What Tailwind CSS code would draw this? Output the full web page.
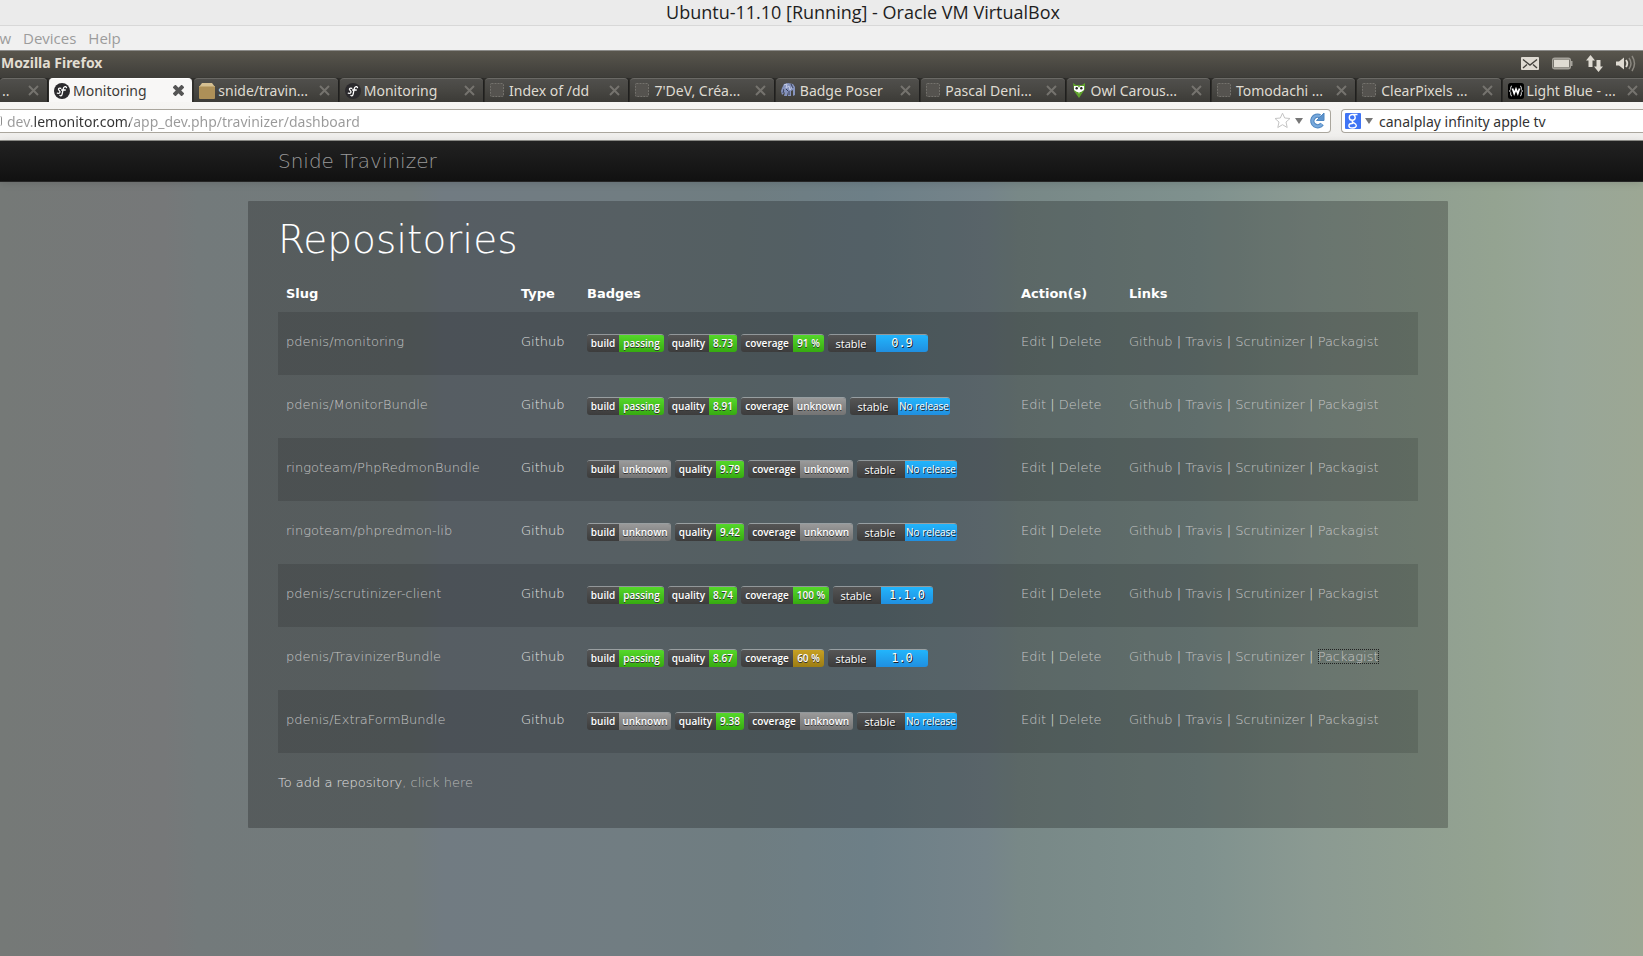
<!DOCTYPE html>
<html lang="en">
<head>
<meta charset="utf-8">
<title>Snide Travinizer</title>
<script src="https://cdn.jsdelivr.net/npm/@tailwindcss/browser@4"></script>
</head>
<body class="flex min-h-screen flex-col overflow-x-hidden bg-[#717f83] font-['Open_Sans',sans-serif]">

<!-- Virtual machine window -->
<header class="border-b border-[#d8d8d8] bg-[#ebebeb] pl-[83px] text-center text-[18px] leading-[25px] text-[#1e1e1e] whitespace-nowrap">Ubuntu-11.10 [Running] - Oracle VM VirtualBox</header>
<nav class="flex h-6 gap-3 bg-[#f0f0f0] text-[15px] leading-6 text-[#9c9c9c]" aria-label="Machine menu">
  <button class="-ml-[7px] w-[18px] text-right">w</button>
  <button>Devices</button>
  <button>Help</button>
</nav>

<!-- Ubuntu panel -->
<div class="flex h-7 items-center justify-between border-t border-[#8c8c8a] bg-linear-to-b from-[#59564d] to-[#3e3d39] pr-[7px] pl-[1px] font-['Noto_Sans',sans-serif]">
  <h1 class="pb-1 text-[14px] leading-5 font-bold text-[#e2ddd2]">Mozilla Firefox</h1>
  <div class="flex items-center gap-[13px] pb-[2px] text-[#dfdbd2]">
    <svg width="18" height="13" viewBox="0 0 18 13" aria-label="Mail"><rect width="18" height="13" rx="1" fill="currentColor"/><path d="M2 2.500L9 8L16 2.500M2 11L6 7.500M16 11L12 7.500" fill="none" stroke="#45433e" stroke-width="1.400"/></svg>
    <svg width="21" height="13" viewBox="0 0 21 13" aria-label="Battery"><rect x=".75" y="1.250" width="17.500" height="10.500" rx="2" fill="none" stroke="#a5a29a" stroke-width="1.500"/><rect x="2" y="2.500" width="15" height="8" fill="currentColor"/><path d="M19.500 4v5" stroke="#a5a29a" stroke-width="2"/></svg>
    <svg width="17" height="17" viewBox="0 0 17 17" aria-label="Network"><path d="M0 5.500L4.500 0L9 5.500H6.500V12H2.500V5.500ZM8 11.500L12.500 17L17 11.500H14.500V5H10.500V11.500Z" fill="currentColor"/></svg>
    <svg width="20" height="17" viewBox="0 0 20 17" aria-label="Sound"><path d="M0 6.500H3L8 2.500V14.500L3 10.500H0Z" fill="currentColor"/><path d="M10 5Q12.500 8.500 10 12" fill="none" stroke="currentColor" stroke-width="1.800"/><path d="M13 3Q17 8.500 13 14M16 1Q21 8.500 16 16" fill="none" stroke="#8b8880" stroke-width="1.500"/></svg>
  </div>
</div>

<!-- Tab strip -->
<div id="tabs" role="tablist" class="-mr-[3px] flex h-6 gap-[2px] bg-[#2f2e2b] font-['Noto_Sans',sans-serif] text-[14px] leading-[23px]"></div>

<!-- Address bar -->
<div class="flex h-[39px] items-center gap-[10px] border-b border-[#8f8f8a] bg-linear-to-b from-[#f6f5f3] to-[#efeeec] pb-[1px] font-['Noto_Sans',sans-serif] text-[14px]">
  <div class="flex h-6 min-w-0 flex-1 items-center rounded-r-[4px] border border-l-0 border-[#aaa69d] bg-white pr-[5px]">
    <span class="h-[10px] w-[2px] rounded-r-full border-r border-[#8e8e8e]"></span>
    <input aria-label="Address" value="dev.lemonitor.com/app_dev.php/travinizer/dashboard" class="ml-[5px] min-w-0 flex-1 bg-[linear-gradient(90deg,#999_27px,#333_27px,#333_123px,#999_123px)] bg-clip-text pt-[2px] text-transparent outline-none">
    <button aria-label="Bookmark"><svg width="17" height="17" viewBox="0 0 17 17"><path d="M8.500 1.200L10.700 6L16 6.500L12 10L13.200 15.500L8.500 12.700L3.800 15.500L5 10L1 6.500L6.300 6Z" fill="#fff" stroke="#c4c4c4"/></svg></button>
    <button aria-label="History" class="ml-1"><svg width="8" height="6" viewBox="0 0 8 6"><path d="M0 0H8L4 6Z" fill="#777"/></svg></button>
    <button aria-label="Reload" class="ml-[6px]"><svg width="16" height="17" viewBox="0 0 16 17"><path d="M13 12A5.300 5.300 0 1 1 11 4.200" fill="none" stroke="#4f86c0" stroke-width="4.400"/><path d="M13 12A5.300 5.300 0 1 1 11 4.200" fill="none" stroke="#78a9dc" stroke-width="2.400"/><path d="M15 1V8.500H7.500Z" fill="#5d93cc" stroke="#4f86c0"/></svg></button>
  </div>
  <div class="flex h-6 w-[302px] items-center rounded-l-[4px] border border-r-0 border-[#aaa69d] bg-white pl-[3px]">
    <svg width="16" height="16" viewBox="0 0 16 16" aria-label="Google"><rect width="16" height="16" rx="1" fill="#3f74f5"/><path d="M12.500 1.500H7.800C5.600 1.500 4.300 2.800 4.300 4.500C4.300 6.200 5.500 7.300 7.300 7.300C9.100 7.300 10.200 6.100 10.200 4.600C10.200 3.200 9.400 2 8.300 1.500M7.800 7.300C6.600 8.300 7.300 9 8.500 9.700C10.300 10.700 11.300 11.300 11.300 12.600C11.300 14.100 9.800 15 7.600 15C5.300 15 3.900 14.200 3.900 12.700C3.900 11 5.800 10.200 8.200 10.200" fill="none" stroke="#fff" stroke-width="1.400"/></svg>
    <button aria-label="Search engines" class="ml-1"><svg width="8" height="6" viewBox="0 0 8 6"><path d="M0 0H8L4 6Z" fill="#777"/></svg></button>
    <input aria-label="Search" value="canalplay infinity apple tv" class="ml-[6px] min-w-0 flex-1 pt-[2px] text-[#333] outline-none">
  </div>
</div>

<!-- Page -->
<div class="flex flex-1 flex-col bg-[linear-gradient(90deg,#757977_0%,#767879_10%,#737a7b_12%,#727b7c_25%,#717b82_27%,#717d82_38%,#6f7d81_45%,#6d7f87_53%,#75848a_60%,#788887_62%,#7f918e_73%,#8b9a92_80%,#94a391_91%,#98a698_95%,#9ca794_100%)] font-['DejaVu_Sans',sans-serif] text-[13px] leading-5 font-extralight text-[#e0e0e0]">
  <div class="h-[41px] border-b border-[#252525] bg-linear-to-b from-[#222] to-[#111] pl-[278px] shadow-[0_1px_8px_rgba(0,0,0,0.12)]">
    <a href="#" class="text-[20px] leading-10 text-[#999]">Snide Travinizer</a>
  </div>
  <main class="mt-[19px] mr-[195px] mb-10 ml-[248px] rounded-[1px] bg-black/24 px-[30px] pb-[35px]">
    <h2 class="pt-[19px] text-[39px] leading-10 text-white">Repositories</h2>
    <table class="mt-[15px] w-full table-fixed text-left">
      <colgroup><col class="w-[235px]"><col class="w-[66px]"><col class="w-[434px]"><col class="w-[108px]"><col></colgroup>
      <thead class="text-white">
        <tr class="h-[37px]"><th class="px-2 font-bold">Slug</th><th class="px-2 font-bold">Type</th><th class="px-2 font-bold">Badges</th><th class="px-2 font-bold">Action(s)</th><th class="px-2 font-bold">Links</th></tr>
      </thead>
      <tbody id="rows"></tbody>
    </table>
    <p class="mt-5">To add a repository<a href="#" class="text-[#b8b8b8]">, click here</a></p>
  </main>
</div>

<script>
const blank = '<svg width="15" height="15" viewBox="0 0 15 15"><rect x=".5" y=".5" width="13" height="13" rx="1" fill="#55534f" stroke="#74726d" stroke-dasharray="2 1"/></svg>';
const sf = '<svg width="16" height="16" viewBox="0 0 16 16"><circle cx="8" cy="8" r="8" fill="#2b2a2d"/><path d="M6.800 5.300C5 4.500 3.700 6 5 7.300C6.900 8.600 6 10.800 3.300 10.200M12.500 4.600C11.500 2.700 9.600 3.800 9.100 6.300L8.200 10.800C7.800 13 6.700 13.300 5.900 12.400M7.600 7H11.300" fill="none" stroke="#fff" stroke-width="1.300" stroke-linecap="round"/></svg>';
const box = '<svg width="16" height="16" viewBox="0 0 16 16"><path d="M3 0H13L16 4H0Z" fill="#d5c092"/><rect y="3" width="16" height="13" rx="1" fill="#ad9058"/><path d="M0 3.500H16" stroke="#c2a872"/></svg>';
const elephant = '<svg width="15" height="15" viewBox="0 0 15 15"><path d="M1 5L3 1L7 0L12 1L14 4V12L12 13V7L10 8V13H7V9L6 13H3L4 9L1 12L0 8Z" fill="#8593bd"/><path d="M3 2L6 1L5 5L8 3L9 7L12 3M2 8L4 6" fill="none" stroke="#c3cbe6"/><path d="M5 6L7 8M10 1L12 5M8 8V12M3 6L2 10" stroke="#343b58"/></svg>';
const owl = '<svg width="15" height="15" viewBox="0 0 15 15"><path d="M1 0L4 2H10L13 0V6L7 15L2 8Z" fill="#5fa32c"/><path d="M2 3H6L7 5L8 3H12V7L9 9H5L2 7Z" fill="#fff"/><path d="M6 8H8L7 11Z" fill="#fff"/><circle cx="4.700" cy="5.300" r="1.200" fill="#222"/><circle cx="9.300" cy="5.300" r="1.200" fill="#222"/></svg>';
const wrap = '<svg width="16" height="16" viewBox="0 0 16 16"><rect width="16" height="16" rx="2.500" fill="#000"/><path d="M4 3Q2.500 3 2.700 5V6.500L1.500 8L2.700 9.500V11Q2.500 13 4 13M12 3Q13.500 3 13.300 5V6.500L14.500 8L13.300 9.500V11Q13.500 13 12 13" fill="none" stroke="#ddd"/><path d="M4.500 5.500L6.200 10.500L8 6L9.800 10.500L11.500 5.500" fill="none" stroke="#fff" stroke-width="1.700"/></svg>';
const tabs = [[sf,'Monitoring'],[box,'snide/travin...'],[sf,'Monitoring'],[blank,'Index of /dd'],[blank,"7'DeV, Créa..."],[elephant,'Badge Poser'],[blank,'Pascal Deni...'],[owl,'Owl Carous...'],[blank,'Tomodachi ...'],[blank,'ClearPixels ...'],[wrap,'Light Blue - ...']];
const dark = 'rounded-t-[4px] border-t border-[#6a6965] bg-linear-to-b from-[#504f4c] via-[#474642] to-[#3c3b37] text-[#dfdbd2] shadow-[1px_0_1px_#1f1f1d]';
const cross = active => `<button aria-label="Close tab"><svg width="11" height="11" viewBox="0 0 11 11"><path d="M1 1L10 10M10 1L1 10" stroke="${active ? '#555' : '#75736e'}" stroke-width="${active ? 4 : 2}"/></svg></button>`;
document.getElementById('tabs').innerHTML =
  `<div class="flex w-[47px] shrink-0 items-center justify-between pr-2 pl-[2px] ${dark}"><span>..</span>${cross(false)}</div>` +
  tabs.map(([icon, name], i) => `<div class="flex min-w-0 flex-1 items-center pr-2 pl-[5px] ${i ? dark : 'rounded-t-[4px] border-t border-white bg-[#f8f7f6] text-[#3c3b37]'}">
    <span class="w-[19px] shrink-0">${icon}</span><button role="tab" class="min-w-0 flex-1 text-left whitespace-nowrap">${name}</button>${cross(!i)}</div>`).join('');

const tone = {
  green: 'from-[#55d82a] to-[#36aa10]',
  gray: 'from-[#9a9a9a] to-[#737373]',
  gold: 'from-[#c7a023] to-[#9c7d14]'
};
const badge = (label, lw, value, vw, color) => `<span class="flex h-[18px] overflow-hidden rounded-[3px] border-t border-white/40 text-center font-['Open_Sans',sans-serif] text-[10px] leading-4 font-semibold text-white [text-shadow:0_1px_0_#333] whitespace-nowrap"><span class="${lw} bg-linear-to-b from-[#555] to-[#3c3c3c]">${label}</span><span class="${vw} bg-linear-to-b ${tone[color]}">${value}</span></span>`;
const stable = v => `<span class="flex h-[18px] overflow-hidden rounded-[3px] border-t border-white/40 text-center font-['Open_Sans',sans-serif] leading-[17px] font-normal text-white [text-shadow:1px_1px_0_#222] whitespace-nowrap"><span class="w-12 bg-linear-to-b from-[#555] to-[#3c3c3c] pr-[2px] text-[11px]">stable</span><span class="w-[52px] bg-linear-to-b from-[#22b5fc] to-[#208fe0] ${v ? "font-['DejaVu_Sans_Mono',monospace] text-[12px]" : 'text-[10px]'}">${v || 'No release'}</span></span>`;
const data = [
  ['pdenis/monitoring', 1, '8.73', '91 %', '0.9'],
  ['pdenis/MonitorBundle', 1, '8.91', '', ''],
  ['ringoteam/PhpRedmonBundle', 0, '9.79', '', ''],
  ['ringoteam/phpredmon-lib', 0, '9.42', '', ''],
  ['pdenis/scrutinizer-client', 1, '8.74', '100 %', '1.1.0'],
  ['pdenis/TravinizerBundle', 1, '8.67', '60 %', '1.0'],
  ['pdenis/ExtraFormBundle', 0, '9.38', '', '']
];
const link = (t, extra = '') => `<a href="#" class="text-[#c4c4c4] ${extra}">${t}</a>`;
document.getElementById('rows').innerHTML = data.map(([slug, pass, q, cov, ver], i) => `<tr class="h-[63px] odd:bg-black/12">
  <td class="px-2 pb-1">${link(slug)}</td><td class="px-2 pb-1">Github</td>
  <td class="px-2"><div class="flex gap-1 pb-[1px]">${badge('build', 'w-8', pass ? 'passing' : 'unknown', pass ? 'w-[45px]' : 'w-[52px]', pass ? 'green' : 'gray')}${badge('quality', 'w-[41px]', q, 'w-7', 'green')}${badge('coverage', 'w-[52px]', cov || 'unknown', !cov ? 'w-[53px]' : cov === '100 %' ? 'w-9' : 'w-[31px]', !cov ? 'gray' : cov === '60 %' ? 'gold' : 'green')}${stable(ver)}</div></td>
  <td class="px-2 pb-1 whitespace-nowrap">${link('Edit')} | ${link('Delete')}</td>
  <td class="px-2 pb-1 whitespace-nowrap">${link('Github')} | ${link('Travis')} | ${link('Scrutinizer')} | ${link('Packagist', i === 5 ? 'outline-1 -outline-offset-1 outline-dotted outline-[#222]' : '')}</td></tr>`).join('');
</script>
</body>
</html>
